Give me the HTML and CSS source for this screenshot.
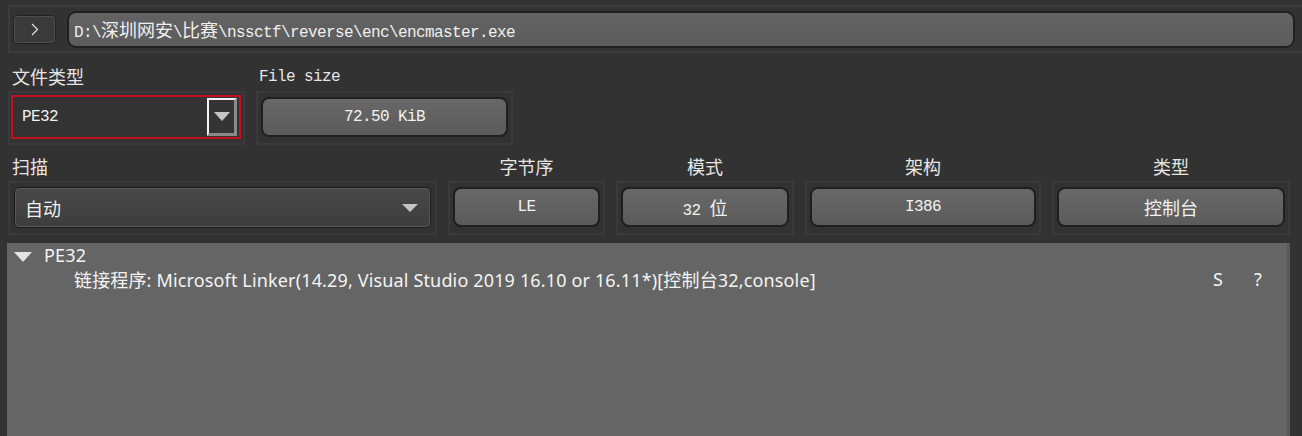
FILE: index.html
```html
<!DOCTYPE html>
<html lang="zh-CN">
<head>
<meta charset="utf-8">
<title>Detect It Easy</title>
<link rel="stylesheet" href="styles.css">
</head>
<body>
<div class="app">
  <div class="topbar">
    <button class="go" type="button">
      <svg width="8" height="13" viewBox="0 0 8 13"><polyline points="1,1 6.5,6.5 1,12" fill="none" stroke="#d8e6f2" stroke-width="1.2"/></svg>
    </button>
    <div class="path mono"><span>D:\<span class="cj">深圳网安</span>\<span class="cj">比赛</span>\nssctf\reverse\enc\encmaster.exe</span></div>
  </div>

  <div class="row1">
    <div class="col c-type">
      <div class="lbl"><span class="cj">文件类型</span></div>
      <div class="grp g-type">
        <div class="combo-red">
          <span class="mono">PE32</span>
          <span class="drop"><span class="tri"></span></span>
        </div>
      </div>
    </div>
    <div class="col c-size">
      <div class="lbl mono lm">File size</div>
      <div class="grp"><div class="val mono"><span>72.50 KiB</span></div></div>
    </div>
  </div>

  <div class="row2">
    <div class="col">
      <div class="lbl2 left"><span class="cj">扫描</span></div>
      <div class="grp g-scan">
        <div class="combo">
          <span class="cj">自动</span>
          <span class="tri"></span>
        </div>
      </div>
    </div>
    <div class="col">
      <div class="lbl2"><span class="cj">字节序</span></div>
      <div class="grp"><div class="val mono"><span>LE</span></div></div>
    </div>
    <div class="col">
      <div class="lbl2"><span class="cj">模式</span></div>
      <div class="grp"><div class="val mono"><span>32 <span class="cj">位</span></span></div></div>
    </div>
    <div class="col">
      <div class="lbl2"><span class="cj">架构</span></div>
      <div class="grp"><div class="val mono"><span>I386</span></div></div>
    </div>
    <div class="col">
      <div class="lbl2"><span class="cj">类型</span></div>
      <div class="grp"><div class="val mono"><span class="cj">控制台</span></div></div>
    </div>
  </div>

  <div class="tree">
    <div class="trow">
      <span class="ttri"></span>
      <span class="tname">PE32</span>
    </div>
    <div class="trow sub">
      <span class="ttext">链接程序: Microsoft Linker(14.29, Visual Studio 2019 16.10 or 16.11*)[控制台32,console]</span>
      <span class="flag">S</span>
      <span class="flag">?</span>
    </div>
  </div>
</div>
</body>
</html>
```

FILE: styles.css
```css
* { box-sizing: border-box; }

html, body {
  margin: 0;
  padding: 0;
  background: #323232;
  overflow: hidden;
}

body {
  width: 1302px;
  height: 436px;
  color: #ececec;
  font-family: "Noto Sans CJK SC", sans-serif;
}

.app {
  padding: 5px 0 0 8px;
}

.mono {
  font-family: "Liberation Mono", "Noto Sans CJK SC", monospace;
  font-size: 16px;
  letter-spacing: -0.6px;
}

.cj {
  font-family: "Noto Sans CJK SC", sans-serif;
  font-size: 18px;
  letter-spacing: 0;
}

/* top bar */
.topbar {
  height: 48px;
  border: 2px solid #3b3b3b;
  border-right: none;
  display: flex;
  align-items: center;
  padding-left: 3px;
  padding-right: 7px;
  gap: 11px;
}

.go {
  width: 43px;
  height: 29px;
  padding: 0;
  margin: 0;
  border: 1px solid #232323;
  border-radius: 4px;
  background: #3a3a3a;
  box-shadow: inset 0 0 0 1px #4d4d4d;
  display: flex;
  align-items: center;
  justify-content: center;
}

.path {
  flex: 1;
  height: 37px;
  border: 2px solid #202020;
  border-radius: 9px;
  background: linear-gradient(#636363, #5c5c5c);
  display: flex;
  align-items: center;
  padding-left: 5px;
  color: #f0f0f0;
  white-space: nowrap;
}

/* rows */
.row1 {
  display: flex;
  gap: 11px;
}

.c-type { width: 237px; }
.c-size { width: 257px; }

.lbl {
  height: 38px;
  line-height: 24px;
  padding-top: 11px;
  padding-left: 4px;
  color: #e6e6e6;
  white-space: nowrap;
}

.lbl.lm {
  padding-top: 12px;
  padding-left: 3px;
}

.row2 {
  display: grid;
  grid-template-columns: 429px 157px 178px 236px 238px;
  gap: 11px;
}

.lbl2 {
  height: 36px;
  line-height: 24px;
  padding-top: 9px;
  text-align: center;
  color: #e6e6e6;
}

.lbl2.left {
  text-align: left;
  padding-left: 4px;
}

/* group frames */
.grp {
  height: 54px;
  border: 2px solid #3a3a3a;
  padding: 4px 3px 6px 3px;
}

.val {
  height: 40px;
  border: 2px solid #1f1f1f;
  border-radius: 8px;
  background: linear-gradient(#686868, #5b5b5b);
  display: flex;
  align-items: center;
  justify-content: center;
  color: #f2f2f2;
  white-space: nowrap;
}

/* file type combo */
.g-type {
  padding: 2px 2px 4px 1px;
}

.combo-red {
  height: 44px;
  border: 2px solid #c50f1f;
  background: #333333;
  display: flex;
  align-items: center;
  justify-content: space-between;
  padding-left: 9px;
  padding-right: 2px;
  color: #f2f2f2;
}

.drop {
  width: 30px;
  height: 38px;
  border-top: 2px solid #f4f4f4;
  border-left: 2px solid #f4f4f4;
  border-right: 3px solid #8a8a8a;
  border-bottom: 3px solid #8a8a8a;
  background: #343434;
  display: flex;
  align-items: center;
  justify-content: center;
}

.tri {
  width: 0;
  height: 0;
  border-left: 8px solid transparent;
  border-right: 8px solid transparent;
  border-top: 9px solid #c4c4c4;
}

/* scan combo */
.g-scan {
  padding: 4px 4px 6px 4px;
}

.combo {
  height: 41px;
  border: 1px solid #1c1c1c;
  border-radius: 5px;
  box-shadow: inset 0 0 0 1px #575757;
  background: linear-gradient(#484848, #3d3d3d);
  display: flex;
  align-items: center;
  justify-content: space-between;
  padding-left: 10px;
  padding-right: 12px;
  color: #f0f0f0;
}

.combo .tri {
  border-top-width: 8px;
}

/* tree */
.tree {
  margin-top: 8px;
  margin-left: -1px;
  width: 1283px;
  height: 200px;
  background: #656565;
  border-right: 3px solid #5a5a5a;
  padding-top: 0;
  color: #f4f4f4;
  font-family: "Noto Sans", "Noto Sans CJK SC", sans-serif;
  font-size: 18px;
  letter-spacing: 0.15px;
}

.trow {
  display: flex;
  align-items: center;
  height: 24px;
  white-space: nowrap;
}

.ttri {
  width: 0;
  height: 0;
  margin-left: 7px;
  margin-top: 3px;
  border-left: 9px solid transparent;
  border-right: 9px solid transparent;
  border-top: 10px solid #e4e4e4;
}

.tname {
  margin-left: 12px;
}

.sub {
  padding-left: 67px;
  padding-right: 9px;
}

.ttext {
  flex: 1;
}

.flag {
  width: 40px;
  text-align: center;
}
```
